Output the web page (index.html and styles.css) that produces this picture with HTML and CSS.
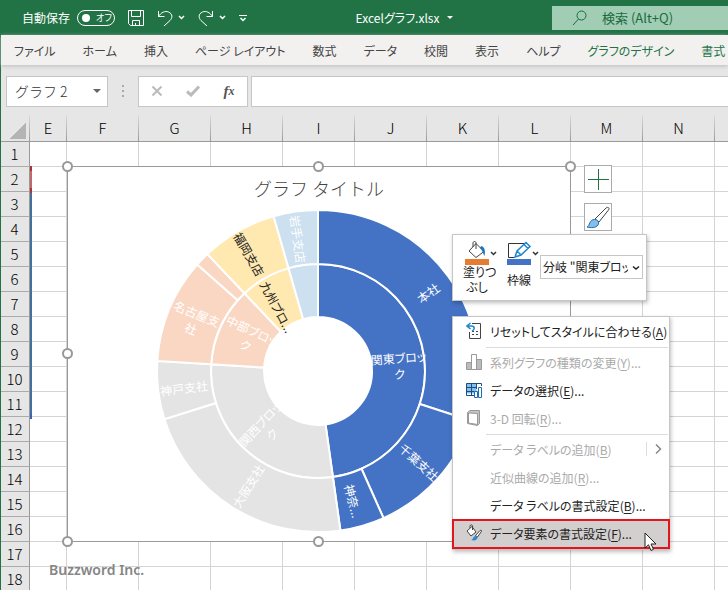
FILE: index.html
```html
<!DOCTYPE html>
<html lang="ja">

<head>
    <meta charset="UTF-8">
    <meta name="viewport" content="width=device-width, initial-scale=1.0">
    <title>Excelグラフ.xlsx</title>
    <link rel="stylesheet" href="styles.css">
</head>

<body>
    <div class="app">
        <header class="title-bar">
            <div class="quick-access">
                <span id="autosave">自動保存</span>
                <button class="toggle" role="switch" aria-checked="false" aria-labelledby="autosave">
                    <span class="knob"></span>オフ
                </button>
                <button class="icon-button save" aria-label="上書き保存">
                    <svg width="16" height="18" viewBox="0 0 16 18">
                        <path d="M.5 1.500H15.500V16.500H2.500L.5 14.500ZM3.500 1.500V7.500H12.500V1.500M4.500 16.500V11.500H11.500V16.500M7.500 14V16.500" />
                    </svg>
                </button>
                <button class="icon-button" aria-label="元に戻す">
                    <svg width="28" height="18" viewBox="0 0 28 18">
                        <path d="M1.500 2V7.500H7.500M1.500 7.500C4 3.500 8 1.500 11.500 3C16 5 15.500 9 13 11.500L7 17" />
                        <path class="thick" d="M22 7L24.500 9.500L27 7" />
                    </svg>
                </button>
                <button class="icon-button" aria-label="やり直し">
                    <svg width="28" height="18" viewBox="0 0 28 18">
                        <path d="M14.500 2V7.500H8.500M14.500 7.500C12 3.500 8 1.500 4.500 3C0 5 .5 9 3 11.500L9 17" />
                        <path class="thick" d="M22 7L24.500 9.500L27 7" />
                    </svg>
                </button>
                <button class="icon-button" aria-label="カスタマイズ">
                    <svg width="8" height="18" viewBox="0 0 8 18">
                        <path d="M0 6.500H8" />
                        <path class="thick" d="M1.500 9L4 11.500L6.500 9" />
                    </svg>
                </button>
            </div>
            <div class="file-name">Excelグラフ.xlsx <span class="caret"></span></div>
            <label class="search">
                <svg width="16" height="16" viewBox="0 0 16 16">
                    <circle cx="9.500" cy="5.500" r="4.500" />
                    <path d="M6.500 9L1 15" />
                </svg>
                <input type="text" placeholder="検索 (Alt+Q)" aria-label="検索">
            </label>
        </header>

        <nav class="tabs">
            <button>ファイル</button>
            <button>ホーム</button>
            <button>挿入</button>
            <button>ページ レイアウト</button>
            <button>数式</button>
            <button>データ</button>
            <button>校閲</button>
            <button>表示</button>
            <button>ヘルプ</button>
            <button class="context">グラフのデザイン</button>
            <button class="context">書式</button>
        </nav>

        <div class="formula-bar">
            <div class="name-box">
                <input type="text" value="グラフ 2" aria-label="名前ボックス">
                <span class="caret"></span>
            </div>
            <div class="grip"><i></i><i></i><i></i></div>
            <div class="formula-buttons">
                <button aria-label="キャンセル">
                    <svg width="12" height="12" viewBox="0 0 12 12"><path d="M1.500 1.500L10.500 10.500M10.500 1.500L1.500 10.500" /></svg>
                </button>
                <button aria-label="入力">
                    <svg width="14" height="12" viewBox="0 0 14 12"><path class="check" d="M1 6.500L5 10L13 1.500" /></svg>
                </button>
                <button class="fx">f<small>x</small></button>
            </div>
            <input class="formula" type="text" aria-label="数式バー">
        </div>

        <main class="sheet">
            <table class="grid">
                <colgroup id="cols"></colgroup>
                <thead>
                    <tr id="col-heads"></tr>
                </thead>
                <tbody id="rows"></tbody>
            </table>
            <div class="range range-red"></div>
            <div class="range range-blue"></div>
            <div class="watermark">Buzzword Inc.</div>

            <section class="chart">
                <h2>グラフ タイトル</h2>
                <svg class="sunburst" width="504" height="376" viewBox="67 166 504 376">
                    <g id="slices"></g>
                    <g id="labels"></g>
                </svg>
                <svg class="handles" width="516" height="388" viewBox="61 160 516 388">
                    <circle cx="67.500" cy="166.500" r="4.500" />
                    <circle cx="318.500" cy="166.500" r="4.500" />
                    <circle cx="570.500" cy="166.500" r="4.500" />
                    <circle cx="67.500" cy="353.500" r="4.500" />
                    <circle cx="570.500" cy="353.500" r="4.500" />
                    <circle cx="67.500" cy="541.500" r="4.500" />
                    <circle cx="318.500" cy="541.500" r="4.500" />
                    <circle cx="570.500" cy="541.500" r="4.500" />
                </svg>
            </section>

            <div class="chart-buttons">
                <button aria-label="グラフ要素">
                    <svg width="26" height="26" viewBox="0 0 26 26"><path d="M13.500 3V24M3 13.500H24" stroke="#217346" /></svg>
                </button>
                <button aria-label="グラフ スタイル">
                    <svg width="26" height="26" viewBox="0 0 26 26">
                        <path d="M10 15L21 4C23 2.500 25 4 23.500 6L14 18Z" fill="#fff" stroke="#444" />
                        <path d="M2 23C5 22 4 15.500 9.500 15.500C13 15.500 14.500 18.500 13 21C11 24 6 24 2 23Z" fill="#83beec" stroke="#1e6fb0" />
                    </svg>
                </button>
            </div>

            <div class="mini-toolbar">
                <button class="tool">
                    <svg width="34" height="24" viewBox="0 0 34 24">
                        <path d="M5 10L12 2.500L20 10.500L12 16.500ZM9 6V2C9 0 12 0 12 2V8" fill="none" stroke="#444" />
                        <path d="M17 5C21 6 21.500 10 20.500 15C19 13 18.500 9 16 7Z" fill="#1e75bb" />
                        <path d="M27 11L29.500 13.500L32 11" fill="none" stroke="#333" stroke-width="1.500" />
                        <path d="M1 18H25V24H1Z" fill="#e57c31" />
                    </svg>
                    <span>塗りつ<br>ぶし</span>
                </button>
                <button class="tool">
                    <svg width="34" height="24" viewBox="0 0 34 24">
                        <path d="M8 16.500H2.500V2.500H18" fill="none" stroke="#333" />
                        <path d="M9 16L11 10L20 1.500L24 5.500L15 14ZM11 10L15 14M18 3.500L22 7.500" fill="#fff" stroke="#1e88cf" stroke-width="1.500" />
                        <path d="M27 11L29.500 13.500L32 11" fill="none" stroke="#333" stroke-width="1.500" />
                        <path d="M1 18H25V24H1Z" fill="#4472c4" />
                    </svg>
                    <span>枠線</span>
                </button>
                <div class="element-picker">
                    <select aria-label="グラフ要素">
                        <option>分岐 "関東ブロック"</option>
                    </select>
                    <svg width="8" height="6" viewBox="0 0 8 6"><path d="M1 1.500L4 4L7 1.500" fill="none" stroke="#222" stroke-width="1.500" /></svg>
                </div>
            </div>

            <div class="menu" role="menu">
                <button role="menuitem">
                    <svg width="16" height="18" viewBox="0 0 16 18">
                        <path d="M6 1.500H14.500V16.500H3.500V10M6 12.500H8M10 12.500H12M6 9.500H8M10 9.500H12" fill="none" stroke="#444" />
                        <path d="M4.500 1L1 4L4.500 7M1 4H5.500C9 4 9 8 6 9" fill="none" stroke="#1e88cf" stroke-width="1.500" />
                    </svg>
                    <span>リセットしてスタイルに合わせる(<u>A</u>)</span>
                </button>
                <hr>
                <button role="menuitem" disabled>
                    <svg width="16" height="18" viewBox="0 0 16 18">
                        <path d="M.5 9.500H5.500V16.500H.5ZM10.500 6.500H15.500V16.500H10.500Z" fill="#bbb" stroke="#999" />
                        <path d="M5.500 1.500H10.500V16.500H5.500Z" fill="#fff" stroke="#999" />
                    </svg>
                    <span>系列グラフの種類の変更(<u>Y</u>)...</span>
                </button>
                <button role="menuitem">
                    <svg width="16" height="18" viewBox="0 0 16 18">
                        <path d="M.5 2.500H10.500V12.500H.5Z" fill="#83beec" />
                        <path d="M.5 2.500H15.500V5M.5 2.500V14.500H8M.5 6.500H11M.5 10.500H8M5.500 2.500V14.500M10.500 2.500V8" fill="none" stroke="#174f80" />
                        <path d="M8.500 10.500H11.500V16.500H8.500ZM12.500 6.500H15.500V16.500H12.500Z" fill="#fff" stroke="#1e6fb0" />
                    </svg>
                    <span>データの選択(<u>E</u>)...</span>
                </button>
                <button role="menuitem" disabled>
                    <svg width="16" height="18" viewBox="0 0 16 18">
                        <path d="M1.500 3.500L4 1.500H13.500V14.500L11.500 16.500L1.500 14.500Z" fill="#c4c4c4" stroke="#999" />
                        <path d="M2.500 4L11.500 4.500V15.500L2.500 14Z" fill="#fff" stroke="#999" />
                    </svg>
                    <span>3-D 回転(<u>R</u>)...</span>
                </button>
                <hr>
                <button role="menuitem" disabled>
                    <span class="no-icon"></span>
                    <span>データ ラベルの追加(<u>B</u>)</span>
                    <svg class="submenu" width="20" height="14" viewBox="0 0 20 14">
                        <path d="M.5 0V14" stroke="#ddd" />
                        <path d="M10 2.500L14.500 7L10 11.500" fill="none" stroke="#888" stroke-width="1.500" />
                    </svg>
                </button>
                <button role="menuitem" disabled>
                    <span class="no-icon"></span>
                    <span>近似曲線の追加(<u>R</u>)...</span>
                </button>
                <button role="menuitem">
                    <span class="no-icon"></span>
                    <span>データ ラベルの書式設定(<u>B</u>)...</span>
                </button>
                <button role="menuitem" class="active">
                    <svg width="16" height="18" viewBox="0 0 16 18">
                        <path d="M1 7L6 2.500L10 8L5 12ZM4 4V2C4 .5 6.500 .5 6.500 2V6" fill="#fff" stroke="#444" />
                        <path d="M9.500 11.500L14 6.500C15.500 5.500 16 7 15 8L11.500 13Z" fill="#fff" stroke="#444" />
                        <path d="M5 16C7.500 15.500 7 12 9.500 12C12 12 12 14.500 10.500 15.500C9 17 7 16.500 5 16Z" fill="#2b8bd3" />
                    </svg>
                    <span>データ要素の書式設定(<u>F</u>)...</span>
                </button>
            </div>
            <svg class="pointer" width="13" height="20" viewBox="0 0 13 20">
                <path d="M1 1V16L4.500 12.800L7 18.500L9.500 17.300L7 12H12Z" fill="#fff" stroke="#222" />
            </svg>
        </main>
    </div>

    <script>
        const columns = ['E', 'F', 'G', 'H', 'I', 'J', 'K', 'L', 'M', 'N', ''];
        const rowCount = 18;

        // from / to are degrees clockwise from the top
        const slices = [
            { from: 0, to: 172, ring: 'inner', color: 'blue' },
            { from: 172, to: 273.6, ring: 'inner', color: 'gray' },
            { from: 273.6, to: 316.6, ring: 'inner', color: 'orange' },
            { from: 316.6, to: 344, ring: 'inner', color: 'yellow' },
            { from: 344, to: 360, ring: 'inner', color: 'sky' },
            { from: 0, to: 108, ring: 'outer', color: 'blue' },
            { from: 108, to: 156, ring: 'outer', color: 'blue' },
            { from: 156, to: 172, ring: 'outer', color: 'blue' },
            { from: 172, to: 252.6, ring: 'outer', color: 'gray' },
            { from: 252.6, to: 273.6, ring: 'outer', color: 'gray' },
            { from: 273.6, to: 311.4, ring: 'outer', color: 'orange' },
            { from: 311.4, to: 316.6, ring: 'outer', color: 'orange' },
            { from: 316.6, to: 344, ring: 'outer', color: 'yellow' },
            { from: 344, to: 360, ring: 'outer', color: 'sky' }
        ];
        const rings = { inner: [54, 107], outer: [107, 161] };
        const center = { x: 318, y: 371 };

        const labels = [
            { lines: ['本社'], x: 428, y: 293, turn: -36 },
            { lines: ['千葉支社'], x: 419, y: 462, turn: 42 },
            { lines: ['神奈...'], x: 353, y: 501, turn: 76 },
            { lines: ['大阪支社'], x: 248, y: 486, turn: -58 },
            { lines: ['神戸支社'], x: 184, y: 388, turn: -7 },
            { lines: ['名古屋支', '社'], x: 194, y: 321, turn: 22 },
            { lines: ['福岡支店'], x: 249, y: 254, turn: 60, dark: true },
            { lines: ['岩手支店'], x: 298, y: 239, turn: 82 },
            { lines: ['関東ブロッ', 'ク'], x: 399, y: 366, turn: -4 },
            { lines: ['関西ブロッ', 'ク'], x: 266, y: 429, turn: -47 },
            { lines: ['中部ブロッ', 'ク'], x: 249, y: 338, turn: 25 },
            { lines: ['九州ブロ...'], x: 277, y: 307, turn: 62, dark: true }
        ];

        function point(radius, degrees) {
            const a = degrees * Math.PI / 180;
            return (center.x + radius * Math.sin(a)) + ' ' + (center.y - radius * Math.cos(a));
        }

        function renderGrid() {
            document.getElementById('cols').innerHTML =
                '<col class="col-num"><col class="col-first">' + '<col class="col">'.repeat(columns.length - 1);
            document.getElementById('col-heads').innerHTML =
                '<th class="corner"></th>' + columns.map(c => `<th scope="col">${c}</th>`).join('');
            let html = '';
            for (let i = 1; i <= rowCount; i++) {
                html += `<tr><th scope="row">${i}</th>${'<td></td>'.repeat(columns.length)}</tr>`;
            }
            document.getElementById('rows').innerHTML = html;
        }

        function renderSlices() {
            document.getElementById('slices').innerHTML = slices.map(s => {
                const [r0, r1] = rings[s.ring];
                const large = s.to - s.from > 180 ? 1 : 0;
                return `<path class="slice ${s.color}" d="M${point(r1, s.from)} A${r1} ${r1} 0 ${large} 1 ${point(r1, s.to)} ` +
                    `L${point(r0, s.to)} A${r0} ${r0} 0 ${large} 0 ${point(r0, s.from)} Z"/>`;
            }).join('');
        }

        function renderLabels() {
            document.getElementById('labels').innerHTML = labels.map(l => {
                const top = 5 - (l.lines.length - 1) * 8;
                const spans = l.lines.map((t, i) => `<tspan x="0" y="${top + i * 16}">${t}</tspan>`).join('');
                return `<text class="label ${l.dark ? 'dark' : ''}" transform="translate(${l.x} ${l.y}) rotate(${l.turn})">${spans}</text>`;
            }).join('');
        }

        renderGrid();
        renderSlices();
        renderLabels();
    </script>
</body>

</html>
```

FILE: styles.css
```css
* {
    box-sizing: border-box;
}

body {
    margin: 0;
    font-family: "Noto Sans CJK JP", sans-serif;
    font-size: 12px;
    font-feature-settings: "palt";
    color: #222;
    overflow: hidden;
}

button,
input,
select {
    font: inherit;
    font-feature-settings: inherit;
    color: inherit;
    background: none;
    border: 0;
    padding: 0;
    margin: 0;
    outline: none;
}

svg {
    display: block;
    flex: none;
}

.app {
    display: flex;
    flex-direction: column;
    height: 100vh;
    border-left: 1px solid #217346;
}

/* title bar */
.title-bar {
    display: grid;
    grid-template-columns: 256px 1fr 176px;
    align-items: center;
    flex: none;
    height: 35px;
    background: #217346;
    color: #fff;
}

.quick-access {
    display: flex;
    align-items: center;
    padding-left: 21px;
    gap: 13px;
}

.toggle {
    display: flex;
    align-items: center;
    gap: 6px;
    width: 38px;
    height: 16px;
    margin-left: -6px;
    padding-left: 4px;
    border: 1px solid #fff;
    border-radius: 8px;
    font-size: 9px;
    line-height: 14px;
    white-space: nowrap;
}

.knob {
    width: 8px;
    height: 8px;
    border-radius: 50%;
    background: #fff;
    flex: none;
}

.icon-button path {
    fill: none;
    stroke: #fff;
}

.icon-button .thick {
    stroke-width: 1.5;
}

.file-name {
    display: flex;
    align-items: center;
    justify-content: center;
    gap: 8px;
}

.caret {
    border: 4px solid transparent;
    border-top-color: currentColor;
    border-bottom: 0;
}

.file-name .caret {
    border-width: 3px;
    border-bottom: 0;
}

.search {
    display: flex;
    align-items: center;
    gap: 14px;
    height: 24px;
    padding-left: 20px;
    background: #a0cdb4;
    color: #1c6a40;
}

.search svg {
    fill: none;
    stroke: #1c6a40;
}

.search input {
    flex: 1;
    min-width: 0;
    font-size: 13px;
}

.search input::placeholder {
    color: #1c6a40;
}

/* ribbon tabs */
.tabs {
    display: flex;
    align-items: center;
    flex: none;
    gap: 27px;
    height: 30px;
    padding-left: 13px;
    background: #f3f1f0;
    color: #444;
    box-shadow: 0 1px 4px #bbb;
    white-space: nowrap;
    overflow: hidden;
    z-index: 1;
}

.tabs .context {
    color: #217346;
}

/* formula bar */
.formula-bar {
    display: flex;
    align-items: center;
    flex: none;
    height: 50px;
    padding: 2px 0 0 5px;
    background: #e6e6e6;
}

.name-box,
.formula-buttons,
.formula {
    display: flex;
    align-items: center;
    height: 31px;
    background: #fff;
    border: 1px solid #c6c6c6;
}

.name-box {
    width: 102px;
    padding: 0 6px 0 8px;
    color: #666;
}

.name-box input {
    flex: 1;
    min-width: 0;
    font-size: 14px;
    font-weight: 300;
    color: #333;
    font-feature-settings: normal;
}

.grip {
    display: flex;
    flex-direction: column;
    align-items: center;
    gap: 3px;
    width: 30px;
}

.grip i {
    width: 2px;
    height: 2px;
    background: #aaa;
}

.formula-buttons {
    width: 110px;
}

.formula-buttons button {
    display: flex;
    justify-content: center;
    align-items: center;
    flex: 1;
}

.formula-buttons path {
    fill: none;
    stroke: #bbb;
    stroke-width: 2;
}

.formula-buttons .check {
    stroke-width: 3;
}

.formula-buttons .fx {
    font: italic bold 15px "Liberation Serif", serif;
    color: #555;
}

.fx small {
    font-size: 12px;
}

.formula {
    flex: 1;
    min-width: 0;
    margin-left: 3px;
    padding: 0 8px;
    border-right: 0;
}

/* sheet */
.sheet {
    position: relative;
    flex: 1;
    overflow: hidden;
}

.grid {
    table-layout: fixed;
    width: 786px;
    margin-left: -1px;
    border-spacing: 0;
    font-size: 15px;
}

.col-num {
    width: 30px;
}

.col-first {
    width: 37px;
}

.col {
    width: 72px;
}

.grid th,
.grid td {
    height: 25px;
    padding: 0;
    line-height: 24px;
    border-right: 1px solid #d4d4d4;
    border-bottom: 1px solid #d4d4d4;
}

.grid th {
    font-weight: 300;
    color: #000;
    background: #e6e6e6;
    border-color: #ababab;
}

.grid thead th {
    height: 27px;
    border-bottom-color: #999;
    border-image: linear-gradient(#dcdcdc, #999) 1;
}

.grid tbody th {
    border-right-color: #999;
}

.grid .corner {
    background: linear-gradient(135deg, transparent 50%, #b4b4b4 50%) no-repeat 9px 7px / 17px 17px #e6e6e6;
}

.range {
    position: absolute;
    left: 29px;
    width: 2px;
}

.range-red {
    top: 51px;
    height: 27px;
    background: #c0686c;
    border: solid #b03038;
    border-width: 5px 0;
}

.range-blue {
    top: 78px;
    height: 226px;
    background: #41719c;
    border-bottom: 5px solid #3465b8;
}

.watermark {
    position: absolute;
    left: 48px;
    top: 445px;
    font: 600 14px/20px "Noto Sans", sans-serif;
    color: #858585;
}

/* chart */
.chart {
    position: absolute;
    left: 66px;
    top: 51px;
    width: 504px;
    height: 376px;
    background: #fff;
    border: 1px solid #999;
}

.chart h2 {
    margin: 8px 0 0;
    font-size: 18px;
    line-height: 26px;
    font-weight: 300;
    font-feature-settings: normal;
    text-align: center;
    color: #444;
}

.sunburst {
    position: absolute;
    left: -1px;
    top: -1px;
}

.handles {
    position: absolute;
    left: -7px;
    top: -7px;
    fill: #fff;
    stroke: #999;
    stroke-width: 2;
}

.slice {
    stroke: #fff;
    stroke-width: 2;
}

.blue {
    fill: #4472c4;
}

.gray {
    fill: #e4e4e4;
}

.orange {
    fill: #fad7c3;
}

.yellow {
    fill: #ffe9b0;
}

.sky {
    fill: #cde0f0;
}

.label {
    fill: #fff;
    font-size: 12px;
    text-anchor: middle;
}

.label.dark {
    fill: #222;
}

.chart-buttons {
    position: absolute;
    left: 583px;
    top: 50px;
    display: flex;
    flex-direction: column;
    gap: 10px;
}

.chart-buttons button {
    width: 28px;
    height: 28px;
    background: #fff;
    border: 1px solid #ababab;
}

/* popups */
.mini-toolbar,
.menu {
    position: absolute;
    left: 451px;
    background: #fff;
    border: 1px solid #c6c6c6;
    box-shadow: 1px 2px 4px rgba(0, 0, 0, .25);
}

.mini-toolbar {
    top: 119px;
    display: flex;
    width: 195px;
    height: 67px;
    padding: 6px 3px 0 11px;
    gap: 8px;
}

.tool {
    display: flex;
    flex-direction: column;
    width: 34px;
}

.tool span {
    display: flex;
    flex-direction: column;
    justify-content: center;
    width: 28px;
    height: 28px;
    margin-left: -1px;
    line-height: 15px;
    text-align: center;
    white-space: nowrap;
}

.element-picker {
    position: relative;
    flex: 1;
    min-width: 0;
    height: 24px;
    margin: 14px 0 0 -8px;
    border: 1px solid #c6c6c6;
}

.element-picker select {
    appearance: none;
    width: 100%;
    height: 20px;
    padding: 0 14px 0 2px;
}

.element-picker svg {
    position: absolute;
    right: 2px;
    top: 9px;
}

.menu {
    top: 201px;
    width: 218px;
    padding: 1px 0;
}

.menu button {
    display: flex;
    align-items: center;
    gap: 8px;
    width: 100%;
    height: 28px;
    padding: 0 0 2px 13px;
    text-align: left;
    white-space: nowrap;
}

.menu button:disabled {
    color: #aaa;
}

.menu .active {
    background: #d2cfce;
    outline: 2px solid #e3141b;
    outline-offset: -1px;
}

.menu hr {
    height: 1px;
    margin: 1px 1px 1px 33px;
    border: 0;
    background: #dcdcdc;
}

.menu u {
    text-underline-offset: 2px;
}

.no-icon {
    width: 16px;
}

.submenu {
    margin-left: auto;
    margin-right: 3px;
}

.pointer {
    position: absolute;
    left: 643px;
    top: 417px;
}
```
